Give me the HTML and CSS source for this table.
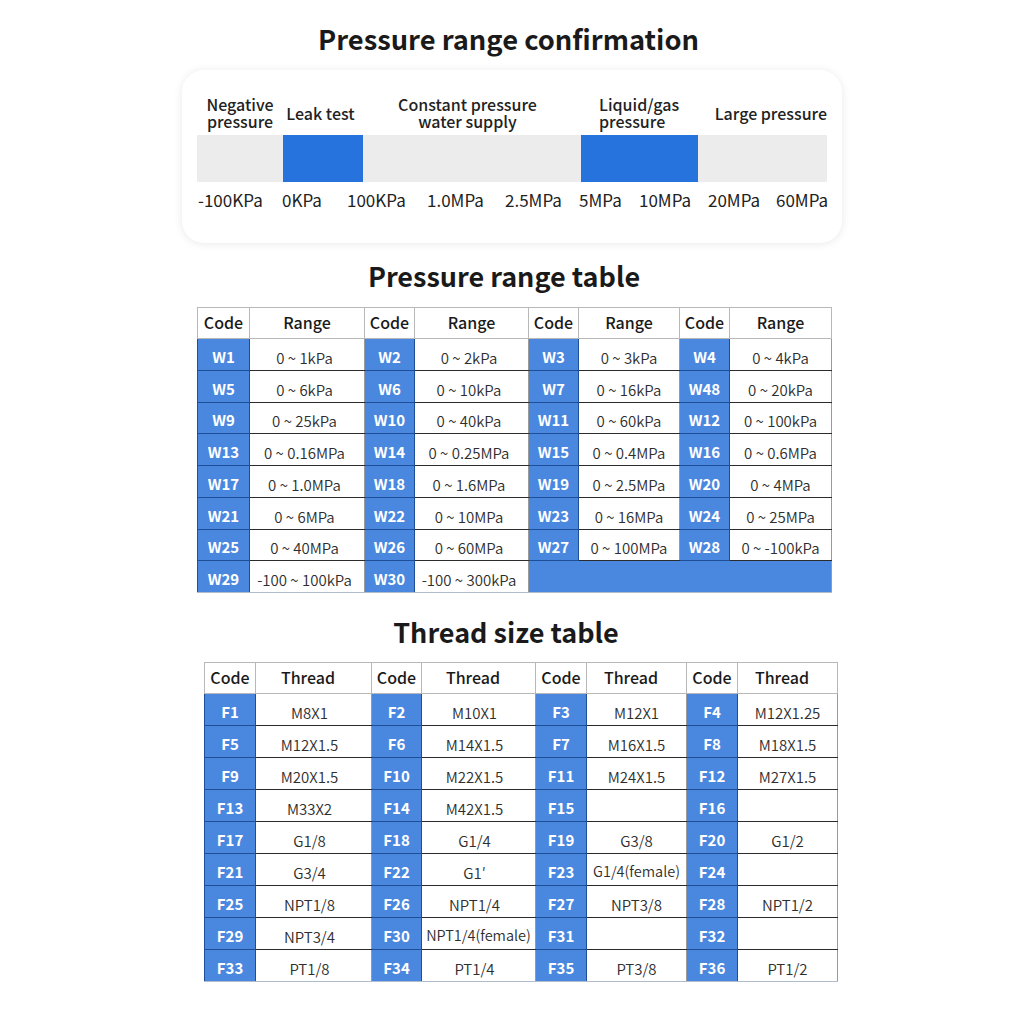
FILE: index.html
```html
<!DOCTYPE html>
<html>
<head>
<meta charset="utf-8">
<link rel="stylesheet" href="styles.css">
</head>
<body>
<div class="page">
  <h1 class="title t1">Pressure range confirmation</h1>
  <div class="card">
    <div class="seg-labels">
      <div class="lab"><span class="ln">Negative</span><span class="ln">pressure</span></div>
      <div class="lab leak">Leak test</div>
      <div class="lab const"><span class="ln">Constant pressure</span><span class="ln">water supply</span></div>
      <div class="lab left"><span class="ln">Liquid/gas</span><span class="ln">pressure</span></div>
      <div class="lab right">Large pressure</div>
    </div>
    <div class="bar">
      <div class="seg grey"></div>
      <div class="seg blue"></div>
      <div class="seg grey"></div>
      <div class="seg blue"></div>
      <div class="seg grey"></div>
    </div>
    <div class="ticks">
      <span>-100KPa</span><span>0KPa</span><span>100KPa</span><span>1.0MPa</span><span>2.5MPa</span><span>5MPa</span><span>10MPa</span><span>20MPa</span><span>60MPa</span>
    </div>
  </div>

  <h1 class="title t2">Pressure range table</h1>
  <table class="tbl tbl1">
    <colgroup><col class="c1"><col class="r1"><col class="c2"><col class="r2"><col class="c3"><col class="r3"><col class="c4"><col class="r4"></colgroup>
    <thead><tr><th>Code</th><th>Range</th><th>Code</th><th>Range</th><th>Code</th><th>Range</th><th>Code</th><th>Range</th></tr></thead>
    <tbody>
      <tr><td class="code">W1</td><td>0 ~ 1kPa</td><td class="code">W2</td><td>0 ~ 2kPa</td><td class="code">W3</td><td>0 ~ 3kPa</td><td class="code">W4</td><td>0 ~ 4kPa</td></tr>
      <tr><td class="code">W5</td><td>0 ~ 6kPa</td><td class="code">W6</td><td>0 ~ 10kPa</td><td class="code">W7</td><td>0 ~ 16kPa</td><td class="code">W48</td><td>0 ~ 20kPa</td></tr>
      <tr><td class="code">W9</td><td>0 ~ 25kPa</td><td class="code">W10</td><td>0 ~ 40kPa</td><td class="code">W11</td><td>0 ~ 60kPa</td><td class="code">W12</td><td>0 ~ 100kPa</td></tr>
      <tr><td class="code">W13</td><td>0 ~ 0.16MPa</td><td class="code">W14</td><td>0 ~ 0.25MPa</td><td class="code">W15</td><td>0 ~ 0.4MPa</td><td class="code">W16</td><td>0 ~ 0.6MPa</td></tr>
      <tr><td class="code">W17</td><td>0 ~ 1.0MPa</td><td class="code">W18</td><td>0 ~ 1.6MPa</td><td class="code">W19</td><td>0 ~ 2.5MPa</td><td class="code">W20</td><td>0 ~ 4MPa</td></tr>
      <tr><td class="code">W21</td><td>0 ~ 6MPa</td><td class="code">W22</td><td>0 ~ 10MPa</td><td class="code">W23</td><td>0 ~ 16MPa</td><td class="code">W24</td><td>0 ~ 25MPa</td></tr>
      <tr><td class="code">W25</td><td>0 ~ 40MPa</td><td class="code">W26</td><td>0 ~ 60MPa</td><td class="code">W27</td><td>0 ~ 100MPa</td><td class="code">W28</td><td>0 ~ -100kPa</td></tr>
      <tr class="last"><td class="code">W29</td><td>-100 ~ 100kPa</td><td class="code">W30</td><td>-100 ~ 300kPa</td><td class="code fill" colspan="4"></td></tr>
    </tbody>
  </table>

  <h1 class="title t3">Thread size table</h1>
  <table class="tbl tbl2">
    <colgroup><col class="c1"><col class="r1"><col class="c2"><col class="r2"><col class="c3"><col class="r3"><col class="c4"><col class="r4"></colgroup>
    <thead><tr><th>Code</th><th class="th-thread">Thread</th><th>Code</th><th class="th-thread">Thread</th><th>Code</th><th class="th-thread">Thread</th><th>Code</th><th class="th-thread">Thread</th></tr></thead>
    <tbody>
      <tr><td class="code">F1</td><td>M8X1</td><td class="code">F2</td><td>M10X1</td><td class="code">F3</td><td>M12X1</td><td class="code">F4</td><td>M12X1.25</td></tr>
      <tr><td class="code">F5</td><td>M12X1.5</td><td class="code">F6</td><td>M14X1.5</td><td class="code">F7</td><td>M16X1.5</td><td class="code">F8</td><td>M18X1.5</td></tr>
      <tr><td class="code">F9</td><td>M20X1.5</td><td class="code">F10</td><td>M22X1.5</td><td class="code">F11</td><td>M24X1.5</td><td class="code">F12</td><td>M27X1.5</td></tr>
      <tr><td class="code">F13</td><td>M33X2</td><td class="code">F14</td><td>M42X1.5</td><td class="code">F15</td><td></td><td class="code">F16</td><td></td></tr>
      <tr><td class="code">F17</td><td>G1/8</td><td class="code">F18</td><td>G1/4</td><td class="code">F19</td><td>G3/8</td><td class="code">F20</td><td>G1/2</td></tr>
      <tr><td class="code">F21</td><td>G3/4</td><td class="code">F22</td><td>G1′</td><td class="code">F23</td><td class="up">G1/4(female)</td><td class="code">F24</td><td></td></tr>
      <tr><td class="code">F25</td><td>NPT1/8</td><td class="code">F26</td><td>NPT1/4</td><td class="code">F27</td><td>NPT3/8</td><td class="code">F28</td><td>NPT1/2</td></tr>
      <tr><td class="code">F29</td><td>NPT3/4</td><td class="code">F30</td><td class="up">NPT1/4(female)</td><td class="code">F31</td><td></td><td class="code">F32</td><td></td></tr>
      <tr class="last"><td class="code">F33</td><td>PT1/8</td><td class="code">F34</td><td>PT1/4</td><td class="code">F35</td><td>PT3/8</td><td class="code">F36</td><td>PT1/2</td></tr>
    </tbody>
  </table>
</div>
</body>
</html>
```
FILE: styles.css
```css
* { box-sizing: border-box; }
html, body { margin: 0; padding: 0; background: #ffffff; }
body {
  font-family: "Noto Sans CJK SC", "Noto Sans", sans-serif;
  color: #222;
  width: 1024px;
  height: 1024px;
  overflow: hidden;
}
.page {
  padding-top: 22px;
  display: flex;
  flex-direction: column;
}
.title {
  margin: 0;
  font-size: 27px;
  line-height: 32px;
  font-weight: 700;
  color: #1a1a1a;
  text-align: center;
}
.t1 { margin-left: -7px; font-size: 27.3px; }
.t2 { margin-top: 17px; margin-left: -16px; }
.t3 { margin-top: 23px; margin-left: -12px; }

.card {
  width: 660px;
  margin: 16px 0 0 182px;
  height: 173px;
  border-radius: 22px;
  background: #fff;
  box-shadow: 0 1px 10px rgba(0,0,0,0.09);
  padding: 22px 15px 0 15px;
}
.seg-labels, .bar {
  display: grid;
  grid-template-columns: 86px 80px 218px 117px 129px;
}
.seg-labels {
  height: 42px;
  align-items: center;
}
.lab {
  font-size: 16px;
  line-height: 17px;
  font-weight: 500;
  text-align: center;
  color: #222;
  display: flex;
  flex-direction: column;
}
.lab .ln { display: block; height: 17px; line-height: 17px; white-space: nowrap; }
.lab.leak { padding-right: 5px; }
.lab.const { padding-right: 9px; }
.lab.left { text-align: left; padding-left: 18px; }
.lab.right { text-align: right; }
.bar { margin-top: 1px; height: 47px; }
.seg.grey { background: #ececec; }
.seg.blue { background: #2673dd; }
.ticks {
  display: grid;
  grid-template-columns: 84px 65px 80px 78px 74px 60px 69px 68px 52px;
  margin-top: 8px;
  padding-left: 1px;
  font-size: 17px;
  line-height: 20px;
  font-weight: 400;
  color: #222;
  white-space: nowrap;
}

.tbl {
  border-collapse: collapse;
  table-layout: fixed;
}
.tbl1 { width: 634px; margin: 15px 0 0 197px; }
.tbl2 { width: 633px; margin: 14px 0 0 204px; }
.tbl1 .c1 { width: 52px; } .tbl1 .r1 { width: 115px; }
.tbl1 .c2 { width: 50px; } .tbl1 .r2 { width: 114px; }
.tbl1 .c3 { width: 50px; } .tbl1 .r3 { width: 101px; }
.tbl1 .c4 { width: 50px; } .tbl1 .r4 { width: 102px; }
.tbl2 .c1 { width: 51px; } .tbl2 .r1 { width: 116px; }
.tbl2 .c2 { width: 50px; } .tbl2 .r2 { width: 114px; }
.tbl2 .c3 { width: 51px; } .tbl2 .r3 { width: 100px; }
.tbl2 .c4 { width: 51px; } .tbl2 .r4 { width: 100px; }

.tbl th {
  height: 31px;
  border: 1px solid #b8b8b8;
  font-size: 16px;
  font-weight: 500;
  color: #1a1a1a;
  padding: 0 0 3px 0;
  text-align: center;
  vertical-align: middle;
}
.tbl th.th-thread { padding-right: 11px; }
.tbl td {
  height: 32px;
  padding: 6px 0 0 0;
  border: 1px solid #2b2b2b;
  border-left-color: #9a9a9a;
  border-right-color: #9a9a9a;
  text-align: center;
  vertical-align: middle;
  font-size: 15px;
  font-weight: 350;
  color: #2e2e2e;
  white-space: nowrap;
}
.tbl1 td { height: 31.75px; }
.tbl1 td:nth-child(2), .tbl1 td:nth-child(4) { padding-right: 5px; }
.tbl2 td:nth-child(2), .tbl2 td:nth-child(4) { padding-right: 8px; }
.tbl td.code {
  background: #4a88e0;
  color: #fff;
  font-weight: 700;
  font-size: 15px;
  border: 1px solid #1e4f96;
  padding: 4px 0 0 0;
}
.tbl td.fill { border-color: #4a88e0 #9a9a9a #9ab4d8 #1e4f96; }
.tbl tr.last td { border-bottom-color: #b0bccb; }
.tbl2 td { font-size: 15px; }
.tbl2 td.up { padding-top: 2px; font-size: 14.5px; }
.tbl2 td.up:nth-child(4) { padding-right: 0; }
```
